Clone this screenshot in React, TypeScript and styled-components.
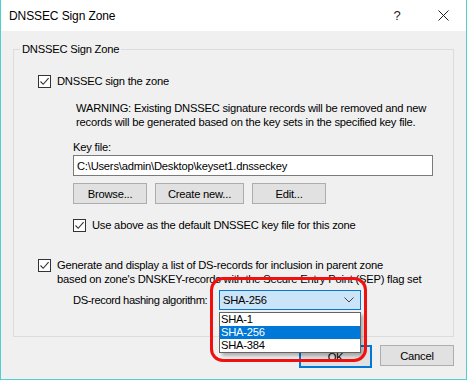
import React from "react";
import styled, { createGlobalStyle } from "styled-components";

const GlobalStyle = createGlobalStyle`
  html, body {
    margin: 0;
    padding: 0;
    background: #ffffff;
  }
  body {
    font-family: "Liberation Sans", Arial, sans-serif;
    font-size: 11.2px;
    letter-spacing: -0.22px;
    color: #000000;
    white-space: nowrap;
  }
`;

const Check = ({ checked = true }: { checked?: boolean }) => (
  <CheckBox>
    {checked && (
      <svg width="11" height="11" viewBox="0 0 11 11">
        <path d="M1.5 5.5 L4.2 8.3 L9.6 2.2" fill="none" stroke="#333" strokeWidth="1.1" />
      </svg>
    )}
  </CheckBox>
);

const App = () => {
  const algorithms = ["SHA-1", "SHA-256", "SHA-384"];

  return (
    <>
      <GlobalStyle />
      <Window>
        <TitleBar>
          <Title>DNSSEC Sign Zone</Title>
          <TitleButtons>
            <HelpButton>?</HelpButton>
            <CloseButton>
              <svg width="11" height="11" viewBox="0 0 11 11">
                <path d="M0.5 0.5 L10.5 10.5 M10.5 0.5 L0.5 10.5" stroke="#222" strokeWidth="1" />
              </svg>
            </CloseButton>
          </TitleButtons>
        </TitleBar>

        <Body>
          <GroupBox>
            <Legend>DNSSEC Sign Zone</Legend>

            <CheckRow $top={17}>
              <Check />
              <span>DNSSEC sign the zone</span>
            </CheckRow>

            <Warning>
              WARNING: Existing DNSSEC signature records will be removed and new
              <br />
              records will be generated based on the key sets in the specified key file.
            </Warning>

            <Indented>
              <FieldLabel>Key file:</FieldLabel>
              <TextInput readOnly value="C:\Users\admin\Desktop\keyset1.dnsseckey" />
              <ButtonRow>
                <Button $width={74}>Browse...</Button>
                <Button $width={89}>Create new...</Button>
                <Button $width={74}>Edit...</Button>
              </ButtonRow>
              <CheckRow $top={14}>
                <Check />
                <span>Use above as the default DNSSEC key file for this zone</span>
              </CheckRow>
            </Indented>

            <CheckRow $top={26} $alignTop>
              <Check />
              <span>
                Generate and display a list of DS-records for inclusion in parent zone
                <br />
                based on zone's DNSKEY-records with the Secure Entry Point (SEP) flag set
              </span>
            </CheckRow>

            <AlgoRow>
              <AlgoLabel>DS-record hashing algorithm:</AlgoLabel>
              <ComboWrap>
                <Combo>
                  <span>SHA-256</span>
                  <svg width="10" height="6" viewBox="0 0 10 6">
                    <path d="M0.5 0.5 L5 5 L9.5 0.5" fill="none" stroke="#444" strokeWidth="1" />
                  </svg>
                </Combo>
                <DropList>
                  {algorithms.map((a) => (
                    <DropItem key={a} $selected={a === "SHA-256"}>
                      {a}
                    </DropItem>
                  ))}
                </DropList>
                <Highlight />
              </ComboWrap>
            </AlgoRow>
          </GroupBox>

          <Footer>
            <Button $width={73} $default>OK</Button>
            <Button $width={74}>Cancel</Button>
          </Footer>
        </Body>
      </Window>
    </>
  );
};

const Window = styled.div`
  width: 467px;
  height: 380px;
  box-sizing: border-box;
  border: 1px solid #4fcfcf;
  border-top: none;
  display: flex;
  flex-direction: column;
  background: #f0f0f0;
  overflow: hidden;
`;

const TitleBar = styled.div`
  height: 31px;
  flex: none;
  background: #ffffff;
  display: flex;
  align-items: center;
  justify-content: space-between;
  padding: 0 0 0 8px;
`;

const Title = styled.div`
  font-size: 12px;
  letter-spacing: -0.1px;
  color: #000;
  margin-top: 1px;
`;

const TitleButtons = styled.div`
  display: flex;
  align-items: center;
  height: 100%;
`;

const HelpButton = styled.div`
  width: 46px;
  height: 100%;
  display: flex;
  align-items: center;
  justify-content: center;
  font-size: 13px;
  color: #222;
`;

const CloseButton = styled(HelpButton)``;

const Body = styled.div`
  flex: 1;
  padding: 10px 12px 0 12px;
  display: flex;
  flex-direction: column;
`;

const GroupBox = styled.fieldset`
  margin: 0;
  height: 296px;
  flex: none;
  box-sizing: border-box;
  border: 1px solid #dcdcdc;
  padding: 0 0 0 24px;
  display: flex;
  flex-direction: column;
`;

const Legend = styled.legend`
  padding: 0 2px;
  margin-left: -18px;
  line-height: 16px;
`;

const CheckBox = styled.span`
  width: 13px;
  height: 13px;
  box-sizing: border-box;
  border: 1px solid #333333;
  background: #ffffff;
  display: flex;
  align-items: center;
  justify-content: center;
  flex: none;
`;

const CheckRow = styled.div<{ $top: number; $alignTop?: boolean }>`
  display: flex;
  align-items: ${(p) => (p.$alignTop ? "flex-start" : "center")};
  gap: 6px;
  margin-top: ${(p) => p.$top}px;
  line-height: 14px;

  & > ${CheckBox} {
    margin-top: ${(p) => (p.$alignTop ? "1px" : "0")};
  }
`;

const Warning = styled.div`
  margin: 13px 0 0 38px;
  line-height: 14px;
`;

const Indented = styled.div`
  margin-left: 35px;
  display: flex;
  flex-direction: column;
`;

const FieldLabel = styled.div`
  margin-top: 11px;
  line-height: 14px;
`;

const TextInput = styled.input`
  margin-top: 1px;
  width: 360px;
  height: 21px;
  box-sizing: border-box;
  border: 1px solid #7a7a7a;
  background: #ffffff;
  font: inherit;
  letter-spacing: inherit;
  color: #000;
  padding: 0 3px;
  outline: none;
`;

const ButtonRow = styled.div`
  display: flex;
  gap: 8px;
  margin-top: 7px;
`;

const Button = styled.div<{ $width: number; $default?: boolean }>`
  width: ${(p) => p.$width}px;
  height: ${(p) => (p.$default ? 23 : 21)}px;
  box-sizing: border-box;
  background: #e1e1e1;
  border: ${(p) => (p.$default ? "2px solid #0078d7" : "1px solid #adadad")};
  display: flex;
  align-items: center;
  justify-content: center;
  line-height: 14px;
`;

const AlgoRow = styled.div`
  display: flex;
  align-items: center;
  gap: 10px;
  margin: 4px 0 0 35px;
`;

const AlgoLabel = styled.span`
  width: 136px;
  flex: none;
  letter-spacing: -0.4px;
`;

const ComboWrap = styled.div`
  position: relative;
`;

const Combo = styled.div`
  width: 142px;
  height: 20px;
  box-sizing: border-box;
  border: 1px solid #0078d7;
  background: #cce4f7;
  display: flex;
  align-items: center;
  justify-content: space-between;
  padding: 0 6px 0 3px;
`;

const DropList = styled.div`
  position: absolute;
  left: 0;
  top: 22px;
  width: 142px;
  box-sizing: border-box;
  border: 1px solid #646464;
  background: #ffffff;
  box-shadow: 3px 3px 3px rgba(0, 0, 0, 0.25);
  z-index: 2;
`;

const DropItem = styled.div<{ $selected?: boolean }>`
  height: 13px;
  line-height: 13px;
  padding-left: 1px;
  background: ${(p) => (p.$selected ? "#0078d7" : "transparent")};
  color: ${(p) => (p.$selected ? "#ffffff" : "#000000")};
`;

const Highlight = styled.div`
  position: absolute;
  left: -9px;
  top: -13px;
  width: 157px;
  height: 85px;
  box-sizing: border-box;
  border: 3px solid #f01010;
  border-radius: 13px;
  z-index: 3;
  pointer-events: none;
`;

const Footer = styled.div`
  display: flex;
  justify-content: flex-end;
  align-items: flex-start;
  gap: 8px;
  margin-top: 8px;
`;

export default App;
